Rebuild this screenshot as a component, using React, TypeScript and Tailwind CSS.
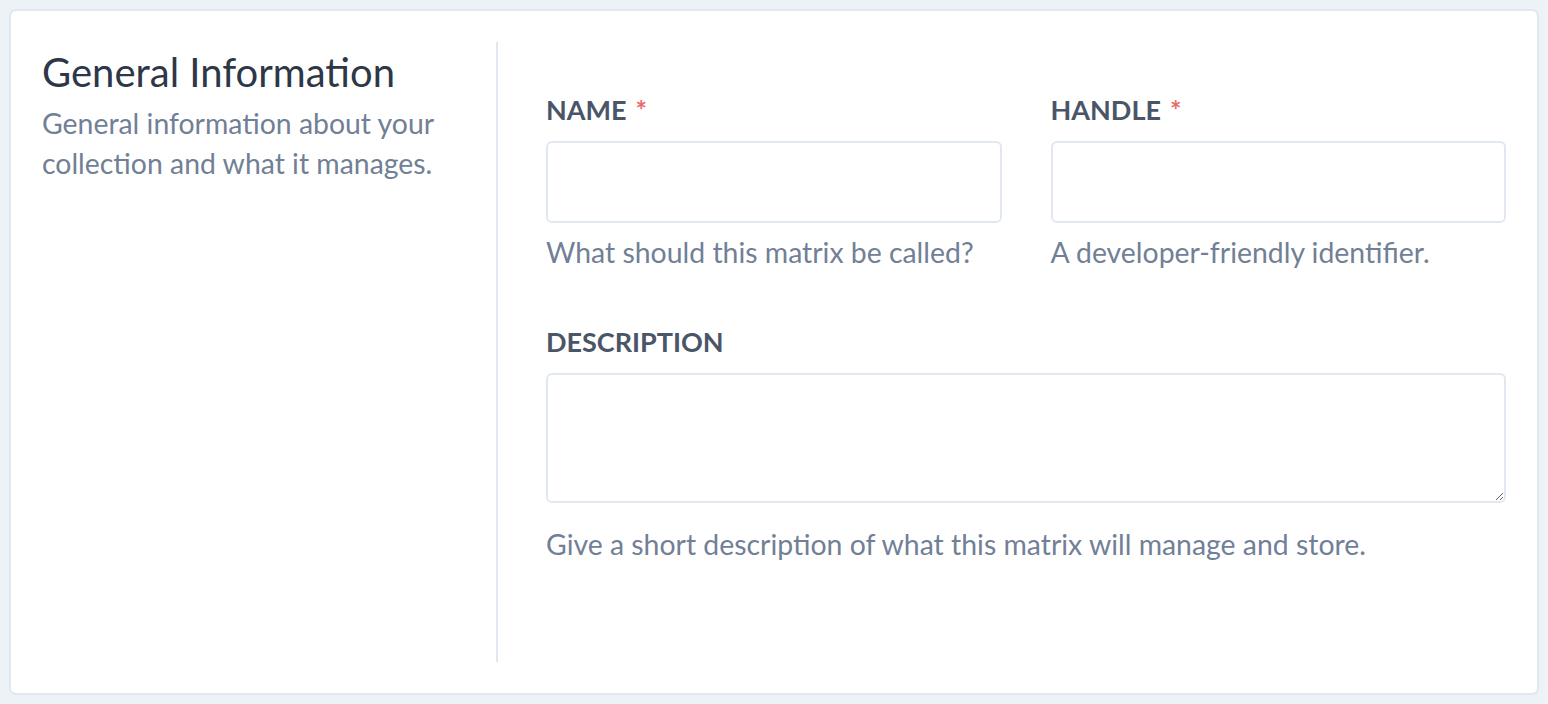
export default function App() {
  return (
    <div className="min-h-screen bg-[#edf2f7] p-[9px] font-['Lato',sans-serif]">
      <div className="flex rounded-[7px] border-2 border-[#e2e8f0] bg-white px-[31px] py-[31px]">
        <div className="w-[454px] shrink-0 pt-[2px]">
          <h2 className="text-[40px] leading-[56px] text-[#2d3748]">General Information</h2>
          <p className="mt-[3px] text-[28.4px] leading-[40px] text-[#718096]">
            General information about your collection and what it manages.
          </p>
        </div>
        <div className="flex-1 border-l-2 border-[#e2e8f0] pl-[48px] pt-[48px] pb-[98px]">
          <div className="grid grid-cols-2 gap-x-[49px]">
            <Field label="Name" required help="What should this matrix be called?" />
            <Field label="Handle" required help="A developer-friendly identifier." />
          </div>
          <div className="mt-[50px]">
            <label className="block text-[27px] font-bold uppercase leading-[40px] text-[#4a5568]">
              Description
            </label>
            <textarea className="mt-[11px] block h-[130px] w-full rounded-[6px] border-2 border-[#e2e8f0] bg-white" />
            <p className="mt-[21px] text-[28.4px] leading-[40px] text-[#718096]">
              Give a short description of what this matrix will manage and store.
            </p>
          </div>
        </div>
      </div>
    </div>
  );
}

function Field({ label, required, help }: { label: string; required?: boolean; help: string }) {
  return (
    <div>
      <label className="block text-[27px] font-bold uppercase leading-[40px] text-[#4a5568]">
        {label}
        {required && <span className="ml-[9px] text-[#e86b6b]">*</span>}
      </label>
      <input className="mt-[11px] block h-[82px] w-full rounded-[6px] border-2 border-[#e2e8f0] bg-white" />
      <p className="mt-[9px] text-[28.4px] leading-[40px] text-[#718096]">{help}</p>
    </div>
  );
}
